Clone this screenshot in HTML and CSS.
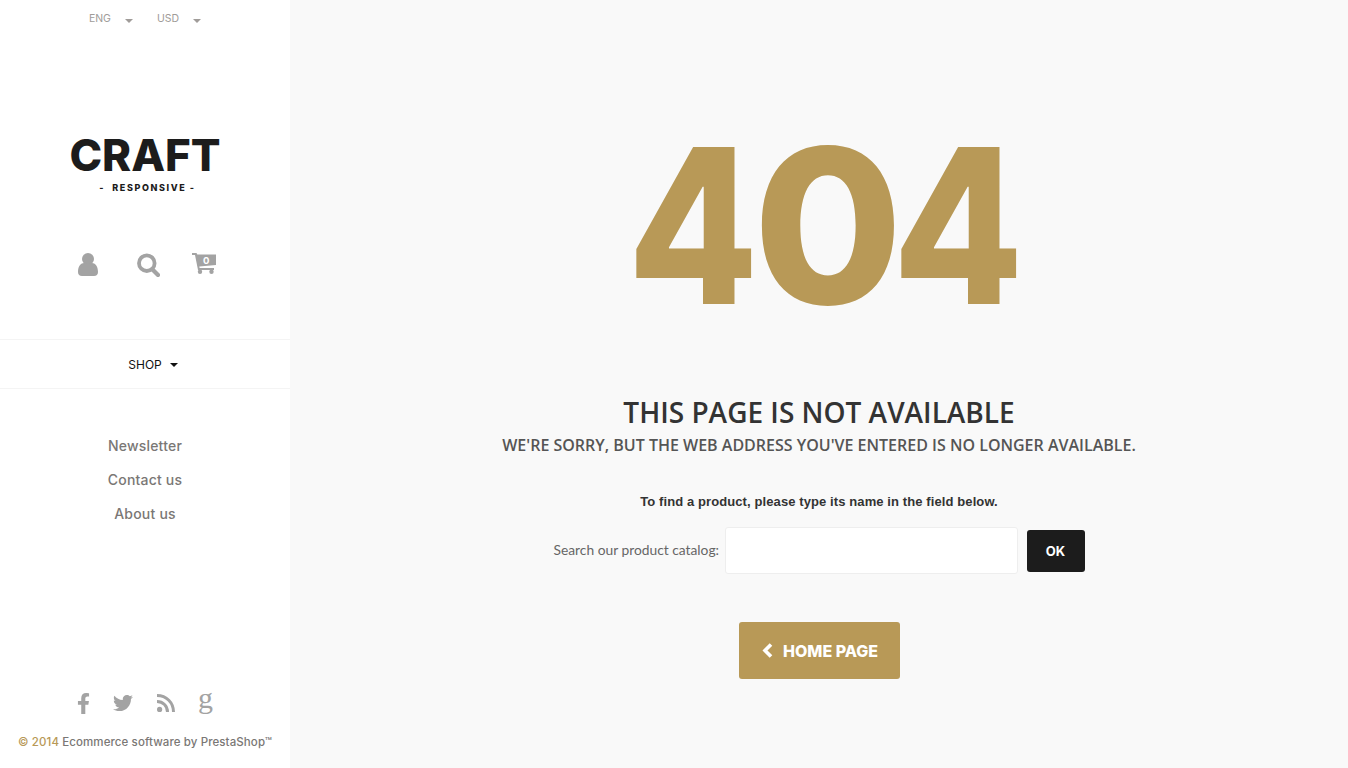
FILE: index.html
```html
<!DOCTYPE html>
<html lang="en">
<head>
  <meta charset="UTF-8">
  <title>404 - Craft</title>
  <link rel="stylesheet" href="styles.css">
</head>
<body>
  <aside class="sidebar">
    <div class="top-select">
      <span class="select-item">ENG <i class="caret"></i></span>
      <span class="select-item">USD <i class="caret"></i></span>
    </div>
    <div class="logo">
      <div class="logo-name">CRAFT</div>
      <div class="logo-sub">- &nbsp;RESPONSIVE -</div>
    </div>
    <div class="tools">
      <a class="tool-user">
        <svg width="20" height="23" viewBox="0 0 20 23" fill="#a3a3a3"><circle cx="10" cy="6" r="6"/><path d="M0 19c0-6 3-9 6-9 1.500 1 6.500 1 8 0 3 0 6 3 6 9 0 2.500-1.500 4-4 4H4c-2.500 0-4-1.500-4-4z"/></svg>
      </a>
      <a class="tool-search">
        <svg width="23" height="24" viewBox="0 0 23 24" fill="none" stroke="#a3a3a3"><circle cx="9.800" cy="10.200" r="7.800" stroke-width="3.800"/><path d="M15.500 16.500l5.500 5.500" stroke-width="4.200" stroke-linecap="round"/></svg>
      </a>
      <a class="tool-cart">
        <svg width="24" height="21" viewBox="0 0 24 21" fill="#a3a3a3"><path d="M0 0h4.500l.8 1.500H24V12L7.300 13.500l.3 1.500H22v2H6L3 2H0z"/><circle cx="8" cy="18.800" r="2.200"/><circle cx="19.500" cy="18.800" r="2.200"/></svg>
        <span class="cart-count">0</span>
      </a>
    </div>
    <nav class="shop-menu"><span>SHOP</span> <i class="caret caret-dark"></i></nav>
    <ul class="side-links">
      <li>Newsletter</li>
      <li>Contact us</li>
      <li>About us</li>
    </ul>
    <div class="social">
      <svg class="s-fb" width="13" height="21" viewBox="0 0 320 512" fill="#a3a3a3"><path d="M279.140 288l14.220-92.660h-88.910v-60.130c0-25.350 12.420-50.060 52.240-50.060h40.420V6.260S260.430 0 225.360 0c-73.220 0-121.080 44.380-121.080 124.720v70.620H22.890V288h81.390v224h100.170V288z"/></svg>
      <svg class="s-tw" width="20" height="20" viewBox="0 0 512 512" fill="#a3a3a3"><path d="M459.370 151.716c.325 4.548.325 9.097.325 13.645 0 138.720-105.583 298.558-298.558 298.558-59.452 0-114.680-17.219-161.137-47.106 8.447.974 16.568 1.299 25.340 1.299 49.055 0 94.213-16.568 130.274-44.832-46.132-.975-84.792-31.188-98.112-72.772 6.498.974 12.995 1.624 19.818 1.624 9.421 0 18.843-1.300 27.614-3.573-48.081-9.747-84.143-51.980-84.143-102.985v-1.299c13.969 7.797 30.214 12.670 47.431 13.319-28.264-18.843-46.781-51.005-46.781-87.391 0-19.492 5.197-37.360 14.294-52.954 51.655 63.675 129.300 105.258 216.365 109.807-1.624-7.797-2.599-15.918-2.599-24.040 0-57.828 46.782-104.934 104.934-104.934 30.213 0 57.502 12.670 76.670 33.137 23.715-4.548 46.456-13.320 66.599-25.340-7.798 24.366-24.366 44.833-46.132 57.827 21.117-2.273 41.584-8.122 60.426-16.243-14.292 20.791-32.161 39.308-52.628 54.253z"/></svg>
      <svg class="s-rss" width="18" height="18" viewBox="0 0 18 18" fill="none" stroke="#a3a3a3" stroke-width="3"><circle cx="2.600" cy="15.400" r="2.600" fill="#a3a3a3" stroke="none"/><path d="M0 7.500c6 0 10.500 4.500 10.500 10.500"/><path d="M0 1.500c9.500 0 16.500 7 16.500 16.500"/></svg>
      <span class="s-g">g</span>
    </div>
    <p class="copyright"><span class="copy-year">© 2014</span> Ecommerce software by PrestaShop™</p>
  </aside>
  <main class="content">
    <div class="big-code"><span class="four four-first">4</span>0<span class="four">4</span></div>
    <h1 class="title">THIS PAGE IS NOT AVAILABLE</h1>
    <h2 class="subtitle">WE'RE SORRY, BUT THE WEB ADDRESS YOU'VE ENTERED IS NO LONGER AVAILABLE.</h2>
    <p class="hint">To find a product, please type its name in the field below.</p>
    <form class="search-form">
      <label for="q">Search our product catalog:</label>
      <input id="q" type="text">
      <button type="button" class="ok-btn">OK</button>
    </form>
    <a class="home-btn">
      <svg width="11" height="15" viewBox="0 0 11 15" fill="none" stroke="#fff" stroke-width="3.600"><path d="M9 1.500L3 7.500l6 6"/></svg>
      HOME PAGE
    </a>
  </main>
</body>
</html>
```

FILE: styles.css
```css
* { box-sizing: border-box; }
html, body { height: 100%; }
body {
  margin: 0;
  height: 768px;
  overflow: hidden;
  display: flex;
  background-color: #f9f9f9;
  font-family: 'Inter', 'Open Sans', sans-serif;
}

/* sidebar */
.sidebar {
  width: 290px;
  flex-shrink: 0;
  height: 768px;
  background-color: #fff;
  display: flex;
  flex-direction: column;
  align-items: center;
}
.top-select {
  margin-top: 12px;
  height: 14px;
  display: flex;
  gap: 24px;
  font-size: 10.500px;
  line-height: 14px;
  color: #a09c99;
}
.select-item { display: flex; align-items: center; gap: 14px; }
.caret {
  display: inline-block;
  width: 0;
  height: 0;
  margin-top: 3px;
  border-left: 4px solid transparent;
  border-right: 4px solid transparent;
  border-top: 4px solid #a09c99;
}
.logo { margin-top: 105px; height: 62px; text-align: center; }
.logo-name {
  font-size: 44px;
  line-height: 48px;
  font-weight: 800;
  color: #1c1c1c;
}
.logo-sub {
  margin-top: 3px;
  padding-left: 5px;
  font-size: 9px;
  line-height: 12px;
  font-weight: 800;
  letter-spacing: 1.600px;
  color: #1c1c1c;
}
.tools {
  margin-top: 60px;
  margin-left: 4px;
  display: flex;
  align-items: flex-start;
  height: 24px;
}
.tool-search { margin: 0 32px 0 39px; }
.tool-cart { position: relative; display: block; }
.cart-count {
  position: absolute;
  top: 3px;
  left: 11px;
  font-size: 9.500px;
  line-height: 10px;
  font-weight: 700;
  color: #fff;
}
.shop-menu {
  width: 100%;
  height: 50px;
  margin-top: 62px;
  border-top: 1px solid #f4f4f4;
  border-bottom: 1px solid #f4f4f4;
  display: flex;
  align-items: center;
  justify-content: center;
  gap: 8px;
  padding-left: 16px;
  font-size: 12px;
  color: #111;
}
.caret-dark { border-top-color: #111; margin-top: 1px; }
.side-links {
  list-style: none;
  margin: 40px 0 0;
  padding: 0;
  text-align: center;
  font-size: 14px;
  letter-spacing: 0.2px;
  line-height: 34px;
  font-weight: 500;
  color: #7a7775;
}
.social {
  margin-top: auto;
  width: 136px;
  display: flex;
  justify-content: space-between;
  align-items: center;
  height: 30px;
}
.s-g {
  font-family: 'Liberation Serif', serif;
  font-size: 30px;
  line-height: 30px;
  color: #a3a3a3;
  position: relative;
  top: -5px;
}
.copyright {
  margin: 17px 0 19px;
  font-size: 11.500px;
  letter-spacing: 0.1px;
  line-height: 14px;
  font-weight: 500;
  color: #7a7775;
  white-space: nowrap;
}
.copy-year { color: #b89957; }

/* main */
.content {
  flex: 1;
  display: flex;
  flex-direction: column;
  align-items: center;
  padding-top: 100px;
}
.big-code {
  font-size: 216px;
  line-height: 252px;
  font-weight: 800;
  color: #b89957;
  letter-spacing: -18px;
}
.four {
  display: inline-block;
  transform: scaleX(0.88);
}
.four-first { transform: translateX(-3px) scaleX(0.88); }
.title {
  margin: 45px 0 0;
  font-family: 'Open Sans', sans-serif;
  font-size: 28px;
  line-height: 30px;
  font-weight: 600;
  color: #333;
}
.subtitle {
  margin: 7px 0 0;
  font-family: 'Open Sans', sans-serif;
  font-size: 16px;
  line-height: 22px;
  font-weight: 600;
  color: #555;
}
.hint {
  margin: 36px 0 0;
  font-family: 'Liberation Sans', sans-serif;
  font-size: 13px;
  letter-spacing: 0.1px;
  line-height: 20px;
  font-weight: 700;
  color: #333;
}
.search-form {
  margin-top: 15px;
  display: flex;
  align-items: center;
  font-family: 'Lato', sans-serif;
}
.search-form label {
  font-size: 13.800px;
  color: #666;
  width: 171px;
  padding-bottom: 3px;
  white-space: nowrap;
}
.search-form input {
  width: 293px;
  height: 47px;
  background: #fff;
  border: 1px solid #eee;
  border-radius: 3px;
  outline: none;
}
.ok-btn {
  margin-left: 9px;
  width: 58px;
  height: 42px;
  border: none;
  border-radius: 3px;
  background-color: #1c1c1c;
  color: #fff;
  font-family: 'Inter', sans-serif;
  font-size: 13px;
  font-weight: 700;
}
.home-btn {
  margin-top: 48px;
  width: 161px;
  height: 57px;
  padding-left: 2px;
  border-radius: 3px;
  background-color: #b89957;
  color: #fff;
  display: flex;
  align-items: center;
  justify-content: center;
  gap: 10px;
  font-size: 16px;
  font-weight: 800;
}
```
